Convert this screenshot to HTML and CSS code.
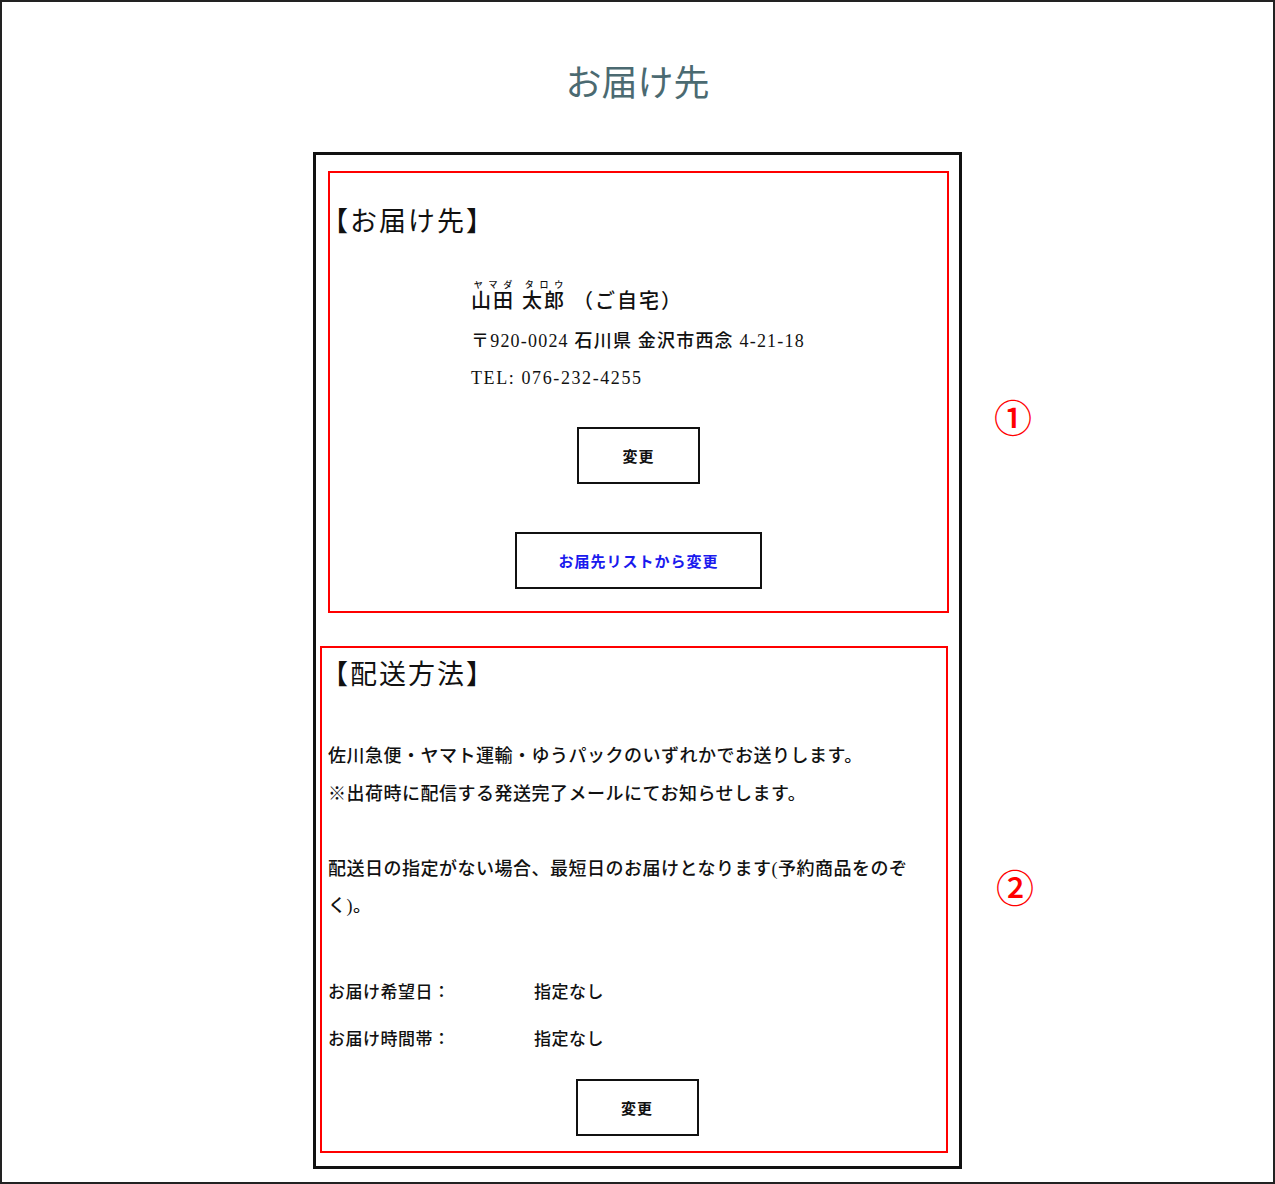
FILE: index.html
```html
<!DOCTYPE html>
<html>
<head>
    <title>お届け先</title>
    <meta charset="UTF-8">
    <link rel="stylesheet" href="styles.css">
</head>
<body>
    <div class="page">
        <h1 class="page-title">お届け先</h1>

        <div class="card">
            <section class="box box-address">
                <h2 class="box-heading">【お届け先】</h2>
                <div class="address">
                    <div class="address-name"><ruby>山田<rt>ヤマダ</rt></ruby> <ruby>太郎<rt>タロウ</rt></ruby> （ご自宅）</div>
                    <div class="address-line">〒920-0024 石川県 金沢市西念 4-21-18</div>
                    <div class="address-line">TEL: 076-232-4255</div>
                </div>
                <div class="actions">
                    <button class="btn">変更</button>
                    <button class="btn btn-wide">お届先リストから変更</button>
                </div>
                <span class="marker marker-1">①</span>
            </section>

            <section class="box box-shipping">
                <h2 class="box-heading">【配送方法】</h2>
                <div class="notes">
                    <p>佐川急便・ヤマト運輸・ゆうパックのいずれかでお送りします。<br>※出荷時に配信する発送完了メールにてお知らせします。</p>
                    <p>配送日の指定がない場合、最短日のお届けとなります(予約商品をのぞく)。</p>
                </div>
                <div class="schedule">
                    <div class="schedule-row">
                        <span class="schedule-label">お届け希望日：</span>
                        <span class="schedule-value">指定なし</span>
                    </div>
                    <div class="schedule-row">
                        <span class="schedule-label">お届け時間帯：</span>
                        <span class="schedule-value">指定なし</span>
                    </div>
                </div>
                <div class="actions actions-tight">
                    <button class="btn">変更</button>
                </div>
                <span class="marker marker-2">②</span>
            </section>
        </div>
    </div>
</body>
</html>
```

FILE: styles.css
```css
body {
    margin: 0;
    font-family: "Liberation Serif", "Noto Sans CJK JP", serif;
    font-weight: 500;
    color: #111;
    background: #fff;
    text-spacing-trim: space-all;
}

.page {
    box-sizing: border-box;
    width: 1275px;
    height: 1184px;
    border: 2px solid #222;
    padding-top: 56px;
}

.page-title {
    margin: 0;
    text-align: center;
    font-family: "Noto Sans CJK JP", sans-serif;
    font-size: 36px;
    line-height: 44px;
    font-weight: 400;
    color: #4b6a71;
}

.card {
    box-sizing: border-box;
    width: 649px;
    margin: 50px auto 0;
    border: 3px solid #111;
    padding: 16px 0 13px;
}

.box {
    position: relative;
    border: 2px solid #f00;
}

.box-address {
    margin: 0 10px 0 12px;
    padding: 29px 0 22px;
}

.box-shipping {
    margin: 33px 11px 0 4px;
    padding: 7px 0 15px 6px;
}

.box-heading {
    margin: 0;
    font-family: "Noto Sans CJK JP", sans-serif;
    font-size: 27px;
    line-height: 36px;
    font-weight: 400;
    letter-spacing: 2px;
}

.box-address .box-heading {
    margin-left: -9px;
}

.box-shipping .box-heading {
    margin-left: -7px;
}

.address {
    padding-left: 141px;
    margin-top: 42px;
}

.address-name {
    font-size: 20px;
    line-height: 28px;
    letter-spacing: 2px;
}

.address-name rt {
    font-size: 9px;
    letter-spacing: 0;
}

.address-line {
    font-size: 18px;
    line-height: 37px;
    letter-spacing: 1.2px;
}

.address-name + .address-line {
    margin-top: 8px;
}

.address-line + .address-line {
    letter-spacing: 1.6px;
}

.actions {
    display: flex;
    flex-direction: column;
    align-items: center;
    gap: 48px;
    margin-top: 30px;
}

.actions-tight {
    margin-top: 16px;
}

.btn {
    box-sizing: border-box;
    width: 123px;
    height: 57px;
    background: #fff;
    border: 2px solid #111;
    font-family: "Noto Sans CJK JP", sans-serif;
    font-size: 15px;
    font-weight: 700;
    color: #111;
    letter-spacing: 1px;
    cursor: pointer;
}

.btn-wide {
    width: 247px;
    color: #1a1aee;
}

.notes {
    margin-top: 47px;
    max-width: 592px;
    font-size: 18px;
    line-height: 37.5px;
    letter-spacing: 0.5px;
}

.notes p {
    margin: 0;
}

.notes p + p {
    margin-top: 37.5px;
}

.schedule {
    margin-top: 43px;
    font-size: 17px;
    letter-spacing: 0.5px;
}

.schedule-row {
    display: grid;
    grid-template-columns: 206px auto;
    line-height: 47px;
}

.marker {
    position: absolute;
    top: 50%;
    font-family: "Noto Sans CJK JP", sans-serif;
    font-size: 38px;
    font-weight: 500;
    line-height: 1;
    color: #f00;
}

.marker-1 {
    left: calc(100% + 47px);
    margin-top: 5px;
}

.marker-2 {
    left: calc(100% + 50px);
    margin-top: -32px;
}
```
